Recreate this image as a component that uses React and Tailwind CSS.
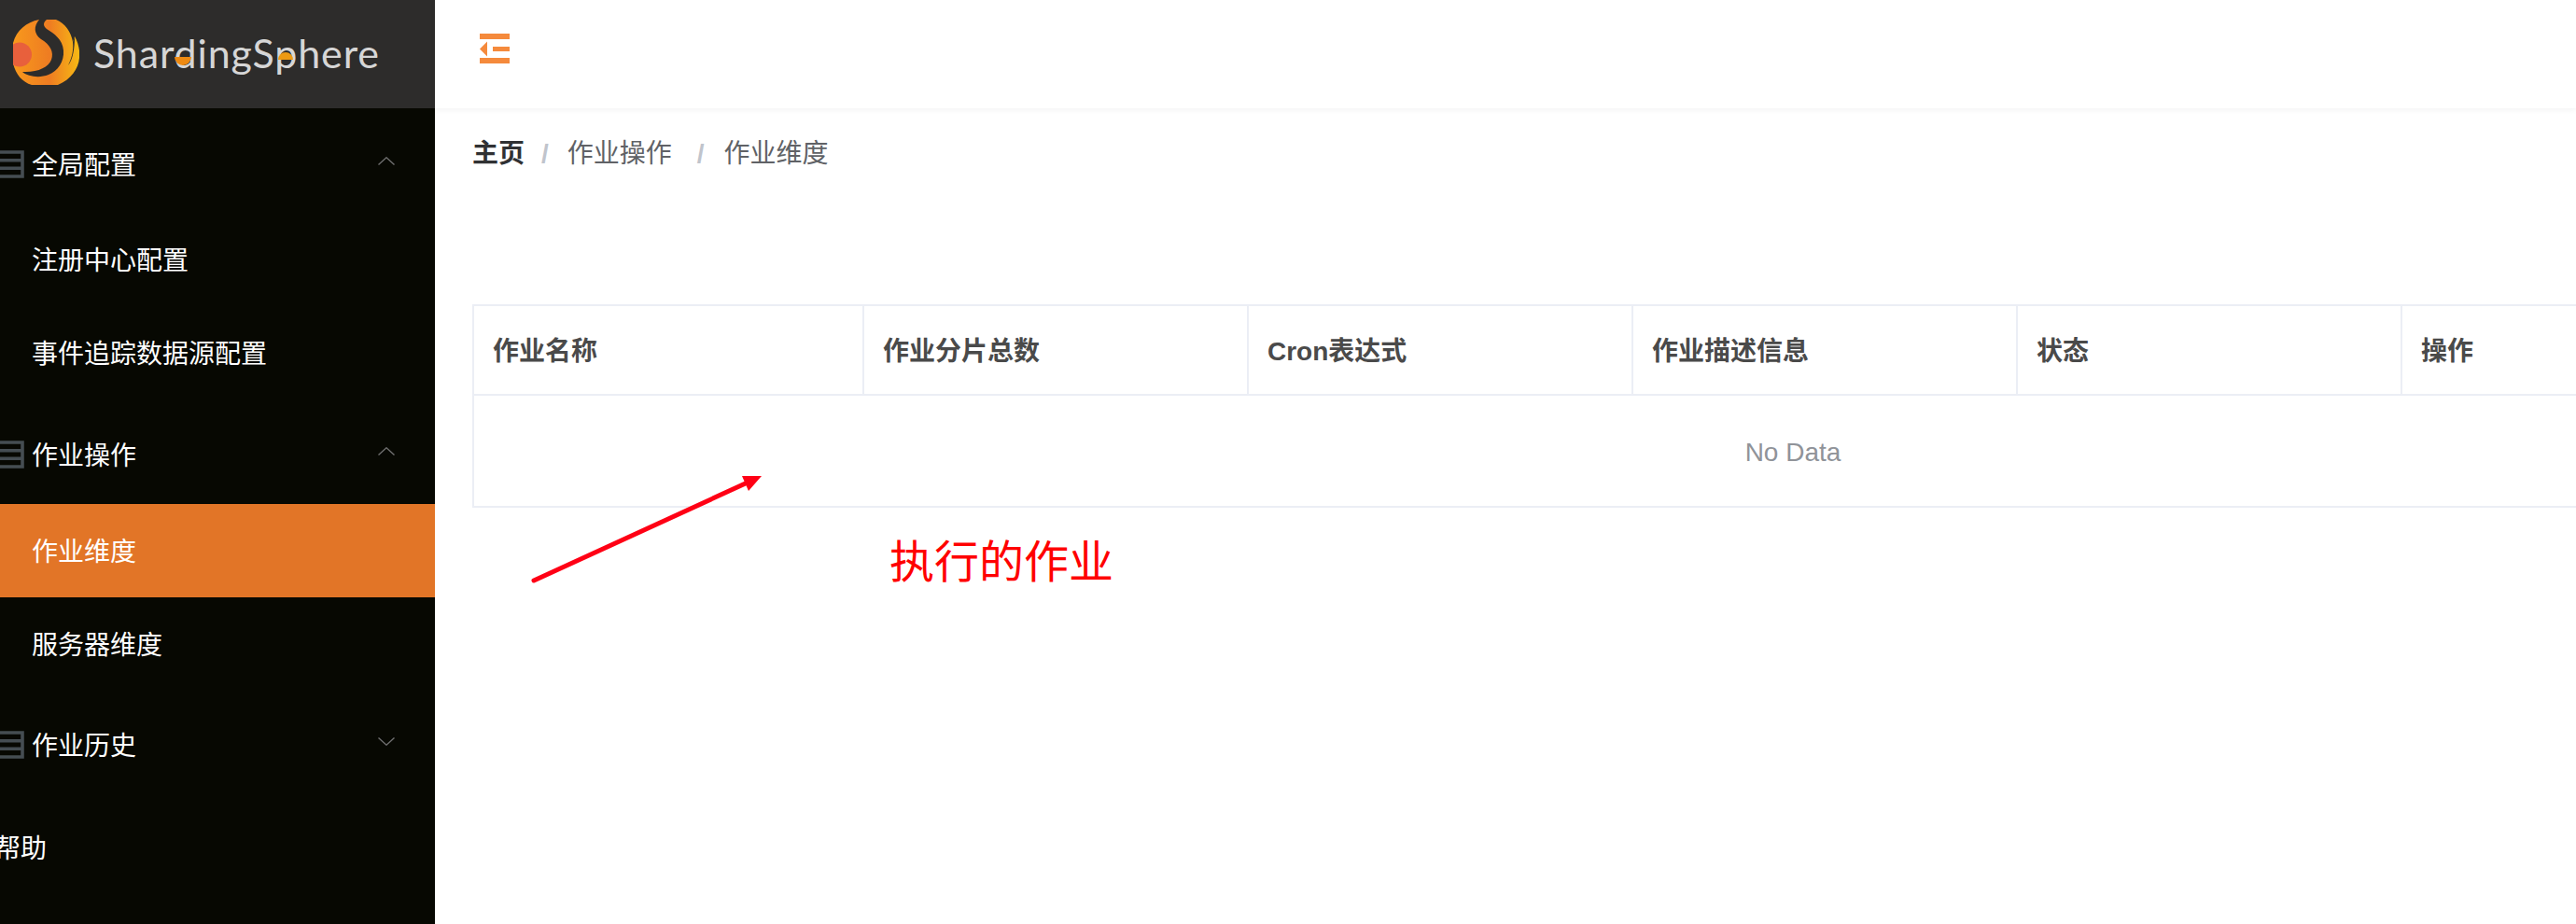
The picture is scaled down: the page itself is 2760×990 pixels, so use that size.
const cjk = "font-['Helvetica_Neue','Liberation_Sans','Noto_Sans_CJK_SC',sans-serif]";

function ListIcon() {
  return (
    <svg width="26" height="30" viewBox="0 0 26 30" className="shrink-0 -translate-y-[2px]">
      <path d="M0 2H24V28H0M0 10.7H24M0 19.3H24" fill="none" stroke="#454d52" strokeWidth="3.6" />
    </svg>
  );
}

function Chevron({ up }) {
  return (
    <svg width="18" height="9" viewBox="0 0 18 9" className="-translate-y-[6px]">
      <path d={up ? "M0.5 8.5L9 0.8L17.5 8.5" : "M0.5 0.5L9 8.2L17.5 0.5"} fill="none" stroke="#6e6e6e" strokeWidth="1.4" />
    </svg>
  );
}

function MenuTitle({ label, up, className }) {
  return (
    <div className={`flex items-center h-[110px] pr-[43px] text-[28px] text-white ${className}`}>
      <ListIcon />
      <span className="ml-2 flex-1">{label}</span>
      <Chevron up={up} />
    </div>
  );
}

function MenuItem({ label, active, className }) {
  return (
    <div className={`flex items-center h-[100px] pl-[34px] text-[28px] text-white ${active ? "bg-[#e27527]" : ""} ${className}`}>
      {label}
    </div>
  );
}

function Logo() {
  return (
    <svg width="466" height="116" viewBox="0 0 466 116" className="block">
      <defs>
        <linearGradient id="flame" x1="14" x2="85" y1="0" y2="0" gradientUnits="userSpaceOnUse">
          <stop offset="0" stopColor="#f8991c" />
          <stop offset="0.55" stopColor="#ee7c22" />
          <stop offset="1" stopColor="#f7b914" />
        </linearGradient>
        <clipPath id="ball">
          <rect x="14" y="21" width="71" height="70" />
        </clipPath>
      </defs>
      <g clipPath="url(#ball)">
        <path d="M14 46C18 32 28 24 42 21L60 21C70 25 76 34 78 45L80 39C84 46 86 55 85 62C84 74 76 85 62 91L34 91C24 88 17 80 14 68Z" fill="url(#flame)" />
        <path d="M42 21C36 28 36 36 44 42C54 48 58 56 55 64C52 72 40 78 24 77C30 82 42 84 52 80C62 76 69 66 68 54C67 42 58 36 50 31C46 28 46 24 50 21Z" fill="#2d2c2b" />
        <path d="M78 45C79 54 77 62 73 70C78 64 80 52 80 39Z" fill="#2d2c2b" />
        <circle cx="21" cy="58.5" r="13" fill="#e8603c" />
      </g>
      <text x="100" y="73" fontFamily="Lato, 'Open Sans', sans-serif" fontWeight="400" fontSize="43" fill="#d6d6d6" textLength="306" lengthAdjust="spacing">ShardingSphere</text>
      <path d="M187 61H205A9 9 0 0 1 187 61Z" fill="#ee8a12" />
      <path d="M298 64A8 8 0 0 1 314 64Z" fill="#ee9a12" />
    </svg>
  );
}

const columns = [
  { label: "作业名称", w: "w-[418px]" },
  { label: "作业分片总数", w: "w-[412px]" },
  { label: "Cron表达式", w: "w-[412px]" },
  { label: "作业描述信息", w: "w-[412px]" },
  { label: "状态", w: "w-[412px]" },
];

export default function App() {
  return (
    <div className={`flex h-[990px] w-[2760px] overflow-hidden bg-white ${cjk}`}>
      <aside className="w-[466px] shrink-0 bg-[#070802] flex flex-col">
        <div className="h-[116px] bg-[#2d2c2b]">
          <Logo />
        </div>
        <MenuTitle label="全局配置" up className="mt-[4px] pt-[6px]" />
        <MenuItem label="注册中心配置" />
        <MenuItem label="事件追踪数据源配置" />
        <MenuTitle label="作业操作" up className="pt-[8px]" />
        <MenuItem label="作业维度" active className="pt-[3px]" />
        <MenuItem label="服务器维度" className="pt-[3px]" />
        <MenuTitle label="作业历史" className="pt-[10px]" />
        <div className="flex items-center h-[110px] pt-[10px] -ml-[6px] text-[28px] text-white">帮助</div>
      </aside>

      <main className="relative flex-1 min-w-0">
        <header className="relative h-[116px] bg-white shadow-[0_2px_6px_rgba(0,21,41,0.05)] flex items-center pl-[48px] pb-[12px]">
          <svg width="32" height="32" viewBox="0 0 32 32">
            <path d="M0 0H32V6H0ZM0 26H32V32H0ZM14 14H32V19H14Z" fill="#f58a3c" />
            <path d="M0 16.5L8 8.5V24.5Z" fill="#f58a3c" />
          </svg>
        </header>

        <nav className="flex items-center h-[94px] pt-[4px] pl-10 text-[28px] text-[#606266]">
          <span className="font-bold text-[#303133]">主页</span>
          <span className="ml-[18px] mr-[20px] font-bold text-[#c0c4cc]">/</span>
          <span>作业操作</span>
          <span className="ml-[27px] mr-[21px] font-bold text-[#c0c4cc]">/</span>
          <span>作业维度</span>
        </nav>

        <div className="ml-10 mt-[116px] w-[2830px] border-2 border-[#ebeef5]">
          <div className="flex h-[96px] border-b-2 border-[#ebeef5] text-[28px] font-bold text-[#4a4a4a]">
            {columns.map((c) => (
              <div key={c.label} className={`${c.w} flex items-center pl-5 pt-[4px] border-r-2 border-[#ebeef5]`}>
                {c.label}
              </div>
            ))}
            <div className="flex-1 flex items-center pl-5 pt-[4px]">操作</div>
          </div>
          <div className="flex h-[118px] items-center justify-center pt-[4px] text-[28px] text-[#909399]">No Data</div>
        </div>

        <svg width="260" height="120" viewBox="0 0 260 120" className="absolute left-[100px] top-[508px]">
          <path d="M6 114L237 8" fill="none" stroke="#ff0015" strokeWidth="5" strokeLinecap="round" />
          <path d="M229 2H250L236 18Z" fill="#ff0015" />
        </svg>
        <span className="absolute left-[487px] top-[568px] text-[48px] leading-[70px] text-[#ff0000]">执行的作业</span>
      </main>
    </div>
  );
}
